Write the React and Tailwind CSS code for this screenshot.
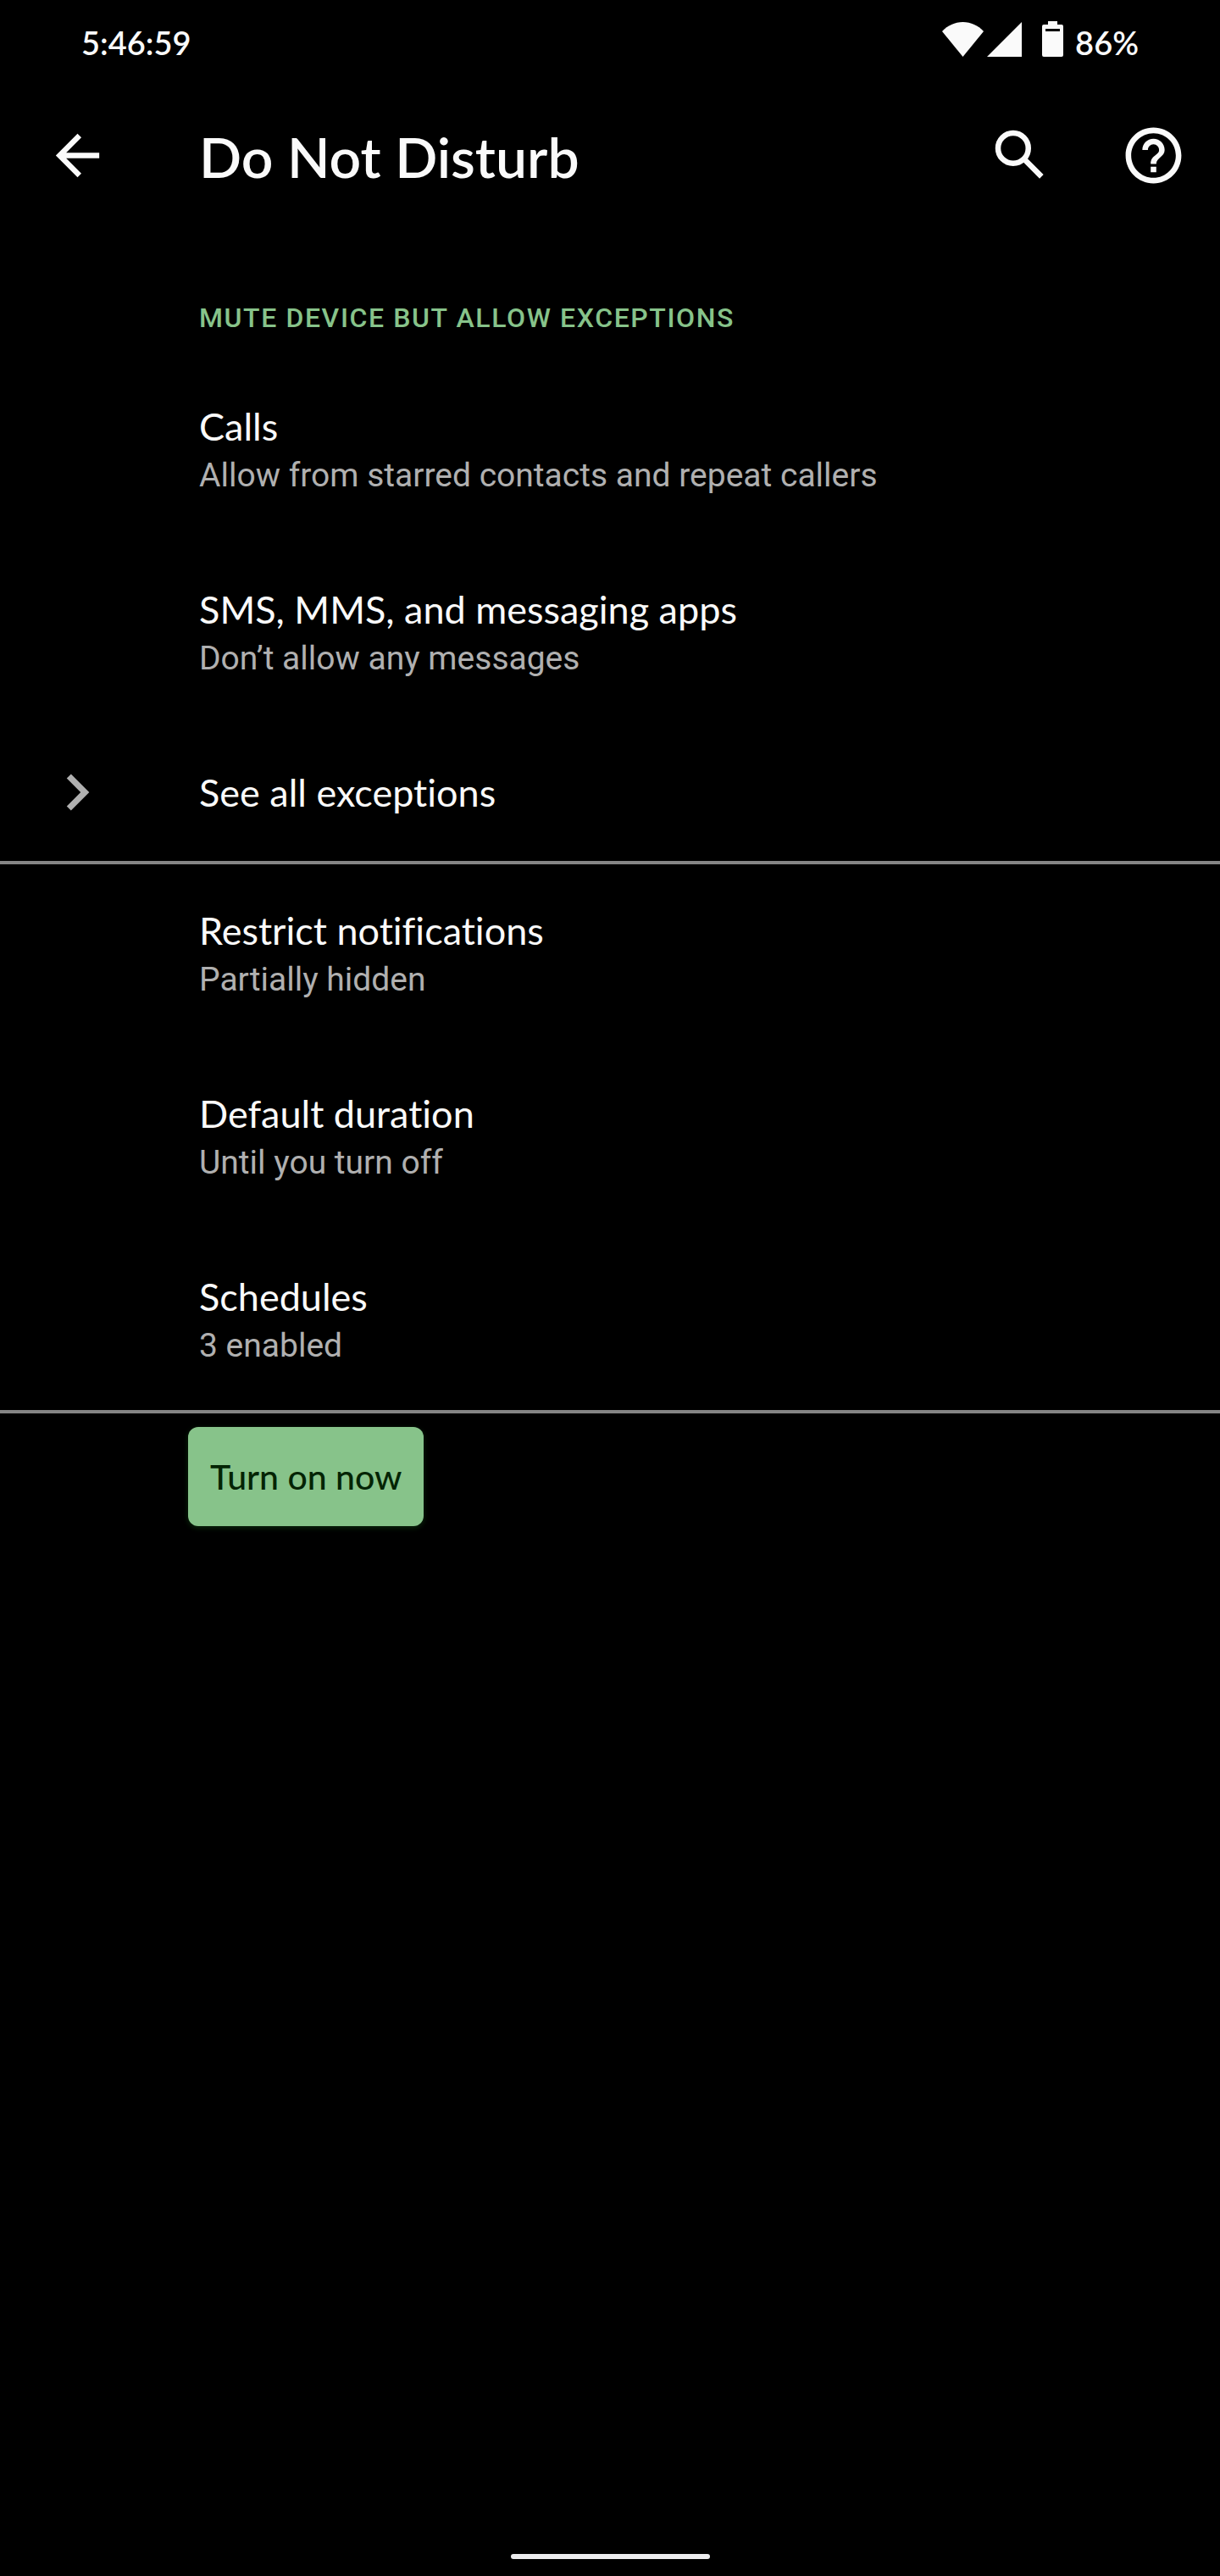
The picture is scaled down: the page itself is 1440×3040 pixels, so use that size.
import React from "react";

function BackIcon() {
  return (
    <svg viewBox="0 0 24 24" className="size-[77px]" fill="currentColor" aria-hidden="true">
      <path d="M20 11H7.83l5.59-5.59L12 4l-8 8 8 8 1.41-1.41L7.83 13H20z" />
    </svg>
  );
}

function SearchIcon() {
  return (
    <svg viewBox="0 0 24 24" className="size-[78px]" fill="none" stroke="currentColor" strokeWidth="2" aria-hidden="true">
      <circle cx="9.5" cy="9.5" r="5.5" />
      <path d="M13.4 13.4l6.4 6.4" />
    </svg>
  );
}

function HelpIcon() {
  return (
    <svg viewBox="0 0 24 24" className="size-[79px]" fill="currentColor" aria-hidden="true">
      <path d="M11 18h2v-2h-2v2zm1-16C6.48 2 2 6.48 2 12s4.48 10 10 10 10-4.48 10-10S17.52 2 12 2zm0 18c-4.41 0-8-3.59-8-8s3.59-8 8-8 8 3.59 8 8-3.59 8-8 8zm0-14c-2.21 0-4 1.79-4 4h2c0-1.1.9-2 2-2s2 .9 2 2c0 2-3 1.75-3 5h2c0-2.25 3-2.5 3-5 0-2.21-1.79-4-4-4z" />
    </svg>
  );
}

function ChevronIcon() {
  return (
    <svg viewBox="0 0 24 24" className="size-[86px]" fill="currentColor" aria-hidden="true">
      <path d="M10 6L8.59 7.41 13.17 12l-4.58 4.59L10 18l6-6z" />
    </svg>
  );
}

function StatusBar() {
  return (
    <div className="flex h-[100px] items-center justify-between px-24 text-[38px] leading-[48px] font-semibold">
      <time>5:46:59</time>
      <div className="flex items-center">
        <svg viewBox="0 0 49 41" className="mb-2 h-[41px] w-[49px]" fill="currentColor" aria-label="Wi-Fi" role="img">
          <path d="M24.5 41L0 11C6.500 4 15 0 24.500 0S42.500 4 49 11z" />
        </svg>
        <svg viewBox="0 0 41 41" className="mb-2 ml-1 size-[41px]" fill="currentColor" aria-label="Mobile signal" role="img">
          <path d="M41 0v41H0z" />
        </svg>
        <svg viewBox="0 0 25 42" className="mb-2 ml-6 h-[42px] w-[25px]" fill="currentColor" fillRule="evenodd" aria-label="Battery" role="img">
          <path d="M7 0H18V4H23Q25 4 25 6V40Q25 42 23 42H2Q0 42 0 40V6Q0 4 2 4H7zM4 9V12H21V9z" />
        </svg>
        <span className="ml-[14px]">86%</span>
      </div>
    </div>
  );
}

function AppBar() {
  return (
    <header className="flex h-[166px] items-center pr-[39px] pl-[53px]">
      <button type="button" aria-label="Navigate up">
        <BackIcon />
      </button>
      <h1 className="ml-[105px] flex-1 pt-1 text-[66px] leading-[80px] font-semibold">Do Not Disturb</h1>
      <button type="button" aria-label="Search">
        <SearchIcon />
      </button>
      <button type="button" aria-label="Help" className="ml-[79px]">
        <HelpIcon />
      </button>
    </header>
  );
}

function Row({ title, summary, divided = false }) {
  return (
    <li className={divided ? "border-t-4 border-[#858585]" : "pt-1"}>
      <button type="button" className="flex h-[212px] w-full flex-col pt-[50px] pl-[235px] text-left">
        <span className="text-[45px] leading-[56px]">{title}</span>
        <span className="pt-[2px] font-[Roboto,sans-serif] text-[39px] leading-[56px] text-[#b0b0b0]">{summary}</span>
      </button>
    </li>
  );
}

export default function App() {
  return (
    <div className="flex min-h-screen flex-col bg-black font-[Lato,sans-serif] text-[#fafafa] [font-variant-ligatures:none]">
      <StatusBar />
      <AppBar />
      <main className="flex-1">
        <section>
          <h2 className="pt-[90px] pl-[235px] font-[Roboto,sans-serif] text-[32px] leading-[38px] font-medium tracking-wider text-[#87c38a] uppercase">
            Mute device but allow exceptions
          </h2>
          <ul className="pt-[27px]">
            <Row title="Calls" summary="Allow from starred contacts and repeat callers" />
            <Row title="SMS, MMS, and messaging apps" summary="Don’t allow any messages" />
            <li>
              <button type="button" className="flex h-[163px] w-full items-center pl-[48px] text-left">
                <span className="text-[#b0b0b0]">
                  <ChevronIcon />
                </span>
                <span className="ml-[101px] text-[45px] leading-[56px]">See all exceptions</span>
              </button>
            </li>
          </ul>
        </section>
        <ul>
          <Row divided title="Restrict notifications" summary="Partially hidden" />
          <Row title="Default duration" summary="Until you turn off" />
          <Row title="Schedules" summary="3 enabled" />
        </ul>
        <div className="border-t-4 border-[#858585] pt-4 pl-[222px]">
          <button
            type="button"
            className="h-[117px] rounded-xl bg-[#87c38a] px-[26px] text-[41px] leading-[48px] font-medium text-[#042404] shadow-[0_2px_6px_#0b2a0d]"
          >
            Turn on now
          </button>
        </div>
      </main>
      <div className="flex justify-center pb-5">
        <div className="h-[6px] w-[235px] rounded-full bg-[#ececee]" />
      </div>
    </div>
  );
}
